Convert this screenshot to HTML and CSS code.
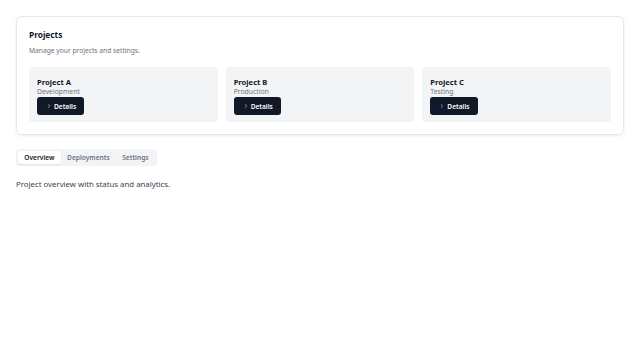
FILE: index.html
```html
<!DOCTYPE html>
<html lang="en">
<head>
  <meta charset="UTF-8" />
  <meta name="viewport" content="width=device-width, initial-scale=1.0"/>
  <title>Projects</title>
  <link rel="stylesheet" href="styles.css">
</head>
<body>
  <!-- PROJECTS CARD -->
  <div class="card">
    <h1 class="card-title">Projects</h1>
    <p class="card-desc">Manage your projects and settings.</p>
    <div class="project-grid">
      <div class="project">
        <div class="project-name">Project A</div>
        <div class="project-stage">Development</div>
        <button class="details-btn"><svg width="6" height="6" viewBox="0 0 24 24" fill="none" stroke="currentColor" stroke-width="2" stroke-linecap="round" stroke-linejoin="round"><path d="M9 18l6-6-6-6"/></svg>Details</button>
      </div>
      <div class="project">
        <div class="project-name">Project B</div>
        <div class="project-stage">Production</div>
        <button class="details-btn"><svg width="6" height="6" viewBox="0 0 24 24" fill="none" stroke="currentColor" stroke-width="2" stroke-linecap="round" stroke-linejoin="round"><path d="M9 18l6-6-6-6"/></svg>Details</button>
      </div>
      <div class="project">
        <div class="project-name">Project C</div>
        <div class="project-stage">Testing</div>
        <button class="details-btn"><svg width="6" height="6" viewBox="0 0 24 24" fill="none" stroke="currentColor" stroke-width="2" stroke-linecap="round" stroke-linejoin="round"><path d="M9 18l6-6-6-6"/></svg>Details</button>
      </div>
    </div>
  </div>

  <!-- TABS -->
  <div class="tabs">
    <button class="tab active">Overview</button>
    <button class="tab">Deployments</button>
    <button class="tab">Settings</button>
  </div>

  <p class="tab-content">Project overview with status and analytics.</p>
</body>
</html>
```

FILE: styles.css
```css
* { margin: 0; padding: 0; box-sizing: border-box; }
html, body {
  height: 100%;
  font-family: 'Noto Sans', 'DejaVu Sans', sans-serif;
  background-color: #fff;
  color: #111827;
}

body {
  padding: 16px;
}

.card {
  border: 1px solid #e5e7eb;
  border-radius: 6px;
  box-shadow: 0 1px 3px rgba(0, 0, 0, 0.08);
  padding: 12px;
  height: 119px;
}

.card-title {
  font-size: 8.3px;
  font-weight: 700;
  line-height: 12px;
}

.card-desc {
  font-size: 6.7px;
  color: #6b7280;
  margin-top: 5px;
  line-height: 10px;
}

.project-grid {
  display: grid;
  grid-template-columns: repeat(3, 1fr);
  gap: 8px;
  margin-top: 11px;
}

.project {
  background-color: #f3f4f6;
  border-radius: 3px;
  padding: 10px 8px 7px;
  height: 55px;
}

.project-name {
  font-size: 7.6px;
  font-weight: 700;
  line-height: 10px;
}

.project-stage {
  font-size: 6.8px;
  color: #6b7280;
  line-height: 10px;
}

.details-btn {
  display: flex;
  align-items: center;
  gap: 2px;
  height: 18px;
  padding: 0 8px 0 9px;
  background-color: #111827;
  color: white;
  font-family: inherit;
  font-size: 6.6px;
  font-weight: 600;
  border: none;
  border-radius: 3px;
}

.tabs {
  display: inline-flex;
  align-items: center;
  margin-top: 14px;
  padding: 2px;
  background-color: #f3f4f6;
  border-radius: 4px;
  height: 17px;
}

.tab {
  background: none;
  border: none;
  font-family: inherit;
  font-size: 6.6px;
  font-weight: 600;
  color: #6b7280;
  padding: 0 6.3px;
  height: 13px;
  border-radius: 3px;
}

.tab.active {
  background-color: #fff;
  color: #111827;
  box-shadow: 0 1px 2px rgba(0, 0, 0, 0.08);
}

.tab-content {
  margin-top: 13px;
  font-size: 7.8px;
  color: #374151;
}
```
